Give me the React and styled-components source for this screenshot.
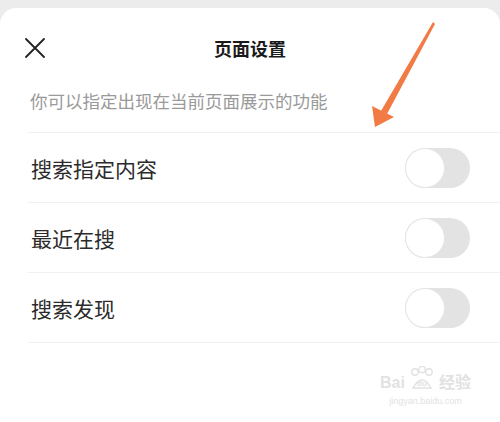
import { createGlobalStyle, styled } from "styled-components";

const items = ["搜索指定内容", "最近在搜", "搜索发现"];

const App = () => {
  return (
    <>
      <GlobalStyle />
      <Sheet>
        <Header>
          <Close aria-label="close">
            <svg width="20" height="20" viewBox="0 0 20 20">
              <path d="M1 1L19 19M19 1L1 19" stroke="#222" strokeWidth="1.8" strokeLinecap="round" />
            </svg>
          </Close>
          <Title>页面设置</Title>
        </Header>
        <Body>
          <Hint>你可以指定出现在当前页面展示的功能</Hint>
          {items.map((label) => (
            <Row key={label}>
              <Label>{label}</Label>
              <Toggle>
                <Knob />
              </Toggle>
            </Row>
          ))}
        </Body>
        <Arrow width="500" height="140" viewBox="0 0 500 140">
          <path d="M433 22 L435 24 L387 114 L381 111 Z" fill="#f27b45" />
          <path d="M375 127 L372 106 L394 117 Z" fill="#f27b45" />
        </Arrow>
        <Watermark>
          <Brand>
            Bai
            <Paw viewBox="0 0 30 26" width="30" height="26">
              <circle cx="8" cy="6" r="3.2" fill="none" stroke="#e2e2e2" strokeWidth="1.4" />
              <circle cx="15" cy="3.5" r="3.2" fill="none" stroke="#e2e2e2" strokeWidth="1.4" />
              <circle cx="22" cy="6" r="3.2" fill="none" stroke="#e2e2e2" strokeWidth="1.4" />
              <path d="M6 22 Q15 6 24 22 Z" fill="none" stroke="#e2e2e2" strokeWidth="1.4" />
              <text x="10" y="20" fontSize="8" fill="#e2e2e2" fontFamily="Liberation Sans">du</text>
            </Paw>
            经验
          </Brand>
          <Url>jingyan.baidu.com</Url>
        </Watermark>
      </Sheet>
    </>
  );
};

export default App;

const GlobalStyle = createGlobalStyle`
  html, body {
    margin: 0;
    padding: 0;
    background: #ececec;
    font-family: "Noto Sans CJK SC", "Noto Sans", sans-serif;
  }
`;

const Sheet = styled.div`
  position: relative;
  margin-top: 8px;
  height: 414px;
  background: #fff;
  border-radius: 16px 16px 0 0;
  overflow: hidden;
`;

const Header = styled.div`
  position: relative;
  height: 80px;
  display: flex;
  align-items: center;
  justify-content: center;
`;

const Close = styled.div`
  position: absolute;
  left: 25px;
  top: 30px;
  width: 20px;
  height: 20px;
  display: flex;
`;

const Title = styled.h1`
  margin: 0;
  font-size: 18px;
  font-weight: 700;
  color: #1a1a1a;
`;

const Body = styled.div`
  margin-left: 28px;
`;

const Hint = styled.div`
  padding: 0 0 18px 2px;
  line-height: 26px;
  font-size: 17.5px;
  color: #9a9a9a;
  border-bottom: 1px solid #f1f1f1;
`;

const Row = styled.div`
  height: 69px;
  display: flex;
  align-items: center;
  justify-content: space-between;
  padding: 0 30px 0 3px;
  border-bottom: 1px solid #f1f1f1;
`;

const Label = styled.span`
  font-size: 21px;
  color: #2b2b2b;
`;

const Toggle = styled.div`
  width: 65px;
  height: 40px;
  border-radius: 20px;
  background: #e3e3e3;
  display: flex;
  align-items: center;
`;

const Knob = styled.div`
  width: 38px;
  height: 38px;
  margin-left: 1px;
  border-radius: 50%;
  background: #fff;
  box-shadow: 0 0 0 1px #e6e6e6;
`;

const Arrow = styled.svg`
  position: absolute;
  left: 0;
  top: -8px;
  pointer-events: none;
`;

const Watermark = styled.div`
  position: absolute;
  left: 380px;
  top: 358px;
  display: flex;
  flex-direction: column;
  align-items: center;
  font-family: "Liberation Sans", "Noto Sans CJK SC", sans-serif;
  color: #e2e2e2;
`;

const Brand = styled.div`
  display: flex;
  align-items: flex-end;
  font-size: 16px;
  font-weight: 700;
  line-height: 18px;
`;

const Paw = styled.svg`
  margin: 0 2px;
`;

const Url = styled.div`
  font-size: 9px;
  margin-top: 4px;
`;
